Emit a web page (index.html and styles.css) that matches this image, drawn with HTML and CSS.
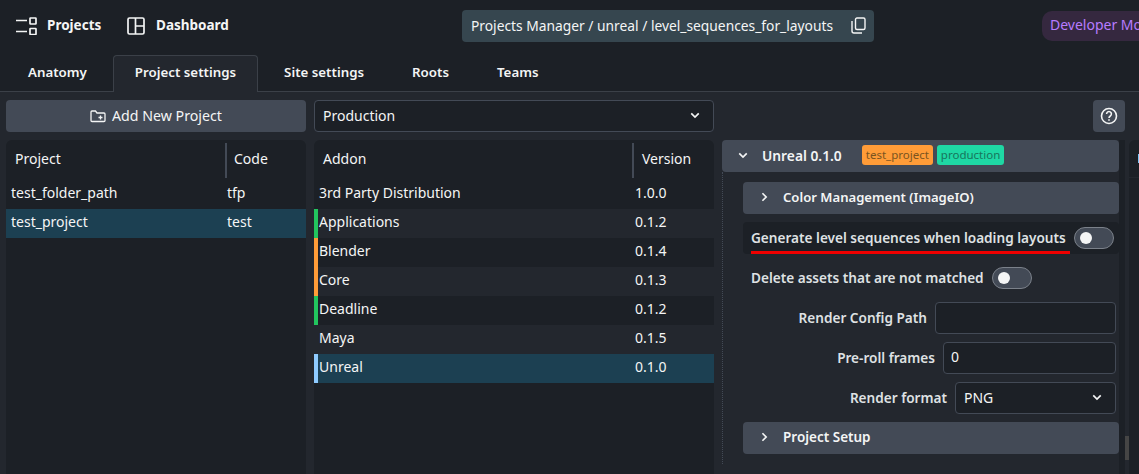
FILE: index.html
```html
<!DOCTYPE html>
<html lang="en">
<head>
    <meta charset="UTF-8">
    <title>Project settings</title>
    <link rel="stylesheet" href="styles.css">
</head>
<body>

    <header class="topbar">
        <div class="nav-item nav-projects">
            <svg width="22" height="18" viewBox="0 0 22 18" fill="none" stroke="#f4f5f5" stroke-width="1.7">
                <path d="M1 3.500h11M1 14.500h11"/>
                <rect x="15" y="1" width="6" height="6" rx="0.5"/>
                <rect x="15" y="11.500" width="6" height="6" rx="0.5"/>
            </svg>
            <span>Projects</span>
        </div>
        <div class="nav-item nav-dashboard">
            <svg width="18" height="18" viewBox="0 0 18 18" fill="none" stroke="#f4f5f5" stroke-width="1.7">
                <rect x="1" y="1" width="16" height="16" rx="1.500"/>
                <path d="M8.500 1v16M8.500 9H17"/>
            </svg>
            <span>Dashboard</span>
        </div>
        <div class="breadcrumb">
            <span>Projects Manager / unreal / level_sequences_for_layouts</span>
            <svg width="15" height="17" viewBox="0 0 15 17" fill="none" stroke="#f4f5f5" stroke-width="1.4">
                <rect x="4.500" y="1" width="9.500" height="11.500" rx="1.500"/>
                <path d="M1 4v10a2 2 0 0 0 2 2h8"/>
            </svg>
        </div>
        <div class="dev-mode">Developer Mode</div>
    </header>

    <nav class="tabs">
        <div class="tab">Anatomy</div>
        <div class="tab tab-active">Project settings</div>
        <div class="tab">Site settings</div>
        <div class="tab">Roots</div>
        <div class="tab">Teams</div>
    </nav>

    <main class="content">
        <div class="toolbar">
            <button class="add-btn">
                <svg width="16" height="14" viewBox="0 0 16 14" fill="none" stroke="#f4f5f5" stroke-width="1.3">
                    <path d="M1 3a1 1 0 0 1 1-1h3.500l1.500 2h7a1 1 0 0 1 1 1v6.500a1 1 0 0 1-1 1H2a1 1 0 0 1-1-1z"/>
                    <path d="M10.500 6.500v4M8.500 8.500h4"/>
                </svg>
                <span>Add New Project</span>
            </button>
            <div class="select bundle-select">
                <span>Production</span>
                <svg width="10" height="7" viewBox="0 0 12 8" fill="none" stroke="#f4f5f5" stroke-width="2"><path d="M1.500 1.500 6 6l4.500-4.500"/></svg>
            </div>
            <button class="help-btn">
                <svg width="18" height="18" viewBox="0 0 18 18" fill="none" stroke="#f4f5f5" stroke-width="1.600">
                    <circle cx="9" cy="9" r="7.500"/>
                    <path d="M6.600 7a2.400 2.400 0 1 1 3.700 2c-.9.600-1.300 1-1.300 2"/>
                    <path d="M9 12.200v1.600"/>
                </svg>
            </button>
        </div>

        <div class="columns">
            <section class="table table-projects">
                <div class="table-head">
                    <div class="head-cell col-project">Project</div>
                    <div class="head-cell col-code">Code</div>
                </div>
                <div class="row"><span class="col-project">test_folder_path</span><span class="col-code">tfp</span></div>
                <div class="row row-selected"><span class="col-project">test_project</span><span class="col-code">test</span></div>
            </section>

            <section class="table table-addons">
                <div class="table-head">
                    <div class="head-cell col-addon">Addon</div>
                    <div class="head-cell col-version">Version</div>
                </div>
                <div class="row"><span class="col-addon">3rd Party Distribution</span><span class="col-version">1.0.0</span></div>
                <div class="row row-alt mark-green"><span class="col-addon">Applications</span><span class="col-version">0.1.2</span></div>
                <div class="row mark-orange"><span class="col-addon">Blender</span><span class="col-version">0.1.4</span></div>
                <div class="row row-alt mark-orange"><span class="col-addon">Core</span><span class="col-version">0.1.3</span></div>
                <div class="row mark-green"><span class="col-addon">Deadline</span><span class="col-version">0.1.2</span></div>
                <div class="row row-alt"><span class="col-addon">Maya</span><span class="col-version">0.1.5</span></div>
                <div class="row row-selected mark-blue"><span class="col-addon">Unreal</span><span class="col-version">0.1.0</span></div>
            </section>

            <section class="settings">
                <div class="panel-head panel-main">
                    <svg width="10" height="7" viewBox="0 0 12 8" fill="none" stroke="#f4f5f5" stroke-width="2"><path d="M1.500 1.500 6 6l4.500-4.500"/></svg>
                    <span class="panel-title">Unreal 0.1.0</span>
                    <span class="badges">
                        <span class="badge badge-orange">test_project</span>
                        <span class="badge badge-green">production</span>
                    </span>
                </div>
                <div class="panel-body">
                    <div class="panel-head">
                        <svg width="7" height="10" viewBox="0 0 8 12" fill="none" stroke="#f4f5f5" stroke-width="2"><path d="M1.500 1.500 6 6l-4.500 4.500"/></svg>
                        <span class="panel-title title-tight">Color Management (ImageIO)</span>
                    </div>
                    <div class="field field-highlight">
                        <span class="field-label underlined">Generate level sequences when loading layouts</span>
                        <span class="toggle"></span>
                    </div>
                    <div class="field">
                        <span class="field-label">Delete assets that are not matched</span>
                        <span class="toggle"></span>
                    </div>
                    <div class="field field-right">
                        <span class="field-label">Render Config Path</span>
                        <div class="input input-path"></div>
                    </div>
                    <div class="field field-right">
                        <span class="field-label">Pre-roll frames</span>
                        <div class="input input-frames">0</div>
                    </div>
                    <div class="field field-right">
                        <span class="field-label">Render format</span>
                        <div class="select input-format">
                            <span>PNG</span>
                            <svg width="10" height="7" viewBox="0 0 12 8" fill="none" stroke="#f4f5f5" stroke-width="2"><path d="M1.500 1.500 6 6l4.500-4.500"/></svg>
                        </div>
                    </div>
                    <div class="panel-head">
                        <svg width="7" height="10" viewBox="0 0 8 12" fill="none" stroke="#f4f5f5" stroke-width="2"><path d="M1.500 1.500 6 6l-4.500 4.500"/></svg>
                        <span class="panel-title">Project Setup</span>
                    </div>
                </div>
            </section>

            <div class="scroll-gutter">
                <div class="scroll-track"><div class="scroll-thumb"></div></div>
            </div>
            <section class="side-panel">
                <div class="side-head"><div class="side-mark"></div></div>
            </section>
        </div>
    </main>

</body>
</html>
```

FILE: styles.css
```css
html, body {
    margin: 0;
    padding: 0;
    height: 474px;
    overflow: hidden;
}
body {
    width: 1139px;
    background-color: #1c2026;
    color: #f4f5f5;
    font-family: "Noto Sans", sans-serif;
    font-size: 14px;
}
svg {
    display: block;
    flex: none;
}

/* top bar */
.topbar {
    height: 52px;
    display: flex;
    align-items: center;
    white-space: nowrap;
}
.nav-item {
    display: flex;
    align-items: center;
    flex: none;
    font-weight: 700;
    font-size: 13.5px;
}
.nav-item span {
    margin-bottom: 3px;
}
.nav-projects {
    margin-left: 15px;
    width: 112px;
}
.nav-projects span {
    margin-left: 10px;
}
.nav-dashboard {
    width: 335px;
}
.nav-dashboard span {
    margin-left: 11px;
}
.breadcrumb {
    flex: none;
    width: 412px;
    height: 32px;
    box-sizing: border-box;
    padding: 0 8px 2px 9px;
    background-color: #36464f;
    border-radius: 4px;
    display: flex;
    align-items: center;
    justify-content: space-between;
    font-size: 13.8px;
}
.dev-mode {
    margin-left: 168px;
    padding: 0 8px;
    height: 30px;
    line-height: 28px;
    background-color: #35283f;
    color: #b77cff;
    border-radius: 10px;
    flex: none;
}

/* tabs */
.tabs {
    height: 40px;
    display: flex;
    gap: 4px;
    align-items: flex-end;
    box-sizing: border-box;
    padding-left: 6px;
    border-bottom: 1px solid #3b4048;
}
.tab {
    height: 37px;
    box-sizing: border-box;
    padding: 0 21px;
    line-height: 32px;
    font-weight: 600;
    font-size: 13.3px;
    border: 1px solid transparent;
    border-bottom: none;
    margin-bottom: -1px;
}
.tab-active {
    background-color: #23272e;
    border-color: #3b4048;
    border-radius: 4px 4px 0 0;
}

/* content */
.content {
    background-color: #23272e;
    height: 382px;
    padding: 8px 14px 0 6px;
}
.toolbar {
    display: flex;
    height: 32px;
    gap: 8px;
}
.add-btn {
    width: 300px;
    background-color: #434a56;
    border: none;
    border-radius: 4px;
    color: #f4f5f5;
    font: inherit;
    font-size: 14.2px;
    display: flex;
    align-items: center;
    justify-content: center;
    gap: 6px;
}
.add-btn span {
    margin-bottom: 2px;
}
.select {
    box-sizing: border-box;
    background-color: #1c2026;
    border: 1px solid #434a56;
    border-radius: 4px;
    display: flex;
    align-items: center;
    justify-content: space-between;
    padding: 0 13px 2px 8px;
}
.bundle-select {
    width: 400px;
    height: 32px;
}
.help-btn {
    margin-left: auto;
    width: 32px;
    background-color: #434a56;
    border: none;
    border-radius: 4px;
    display: flex;
    align-items: center;
    justify-content: center;
    padding: 0;
}

.columns {
    display: flex;
    margin-top: 8px;
    height: 334px;
    margin-right: -14px;
}

/* tables */
.table {
    background-color: #1c2026;
    border-radius: 6px 6px 0 0;
    margin-right: 8px;
    flex: none;
}
.table-projects {
    width: 300px;
}
.table-addons {
    width: 400px;
}
.table-head {
    display: flex;
    height: 38px;
    margin-bottom: 2px;
    align-items: flex-end;
}
.head-cell {
    height: 35px;
    line-height: 32px;
    box-sizing: border-box;
    flex: none;
}
.table-projects .head-cell.col-project {
    padding-left: 9px;
    border-right: 2px solid #434a56;
    width: 221px;
}
.table-projects .head-cell.col-code {
    padding-left: 7px;
}
.table-addons .head-cell.col-addon {
    padding-left: 9px;
    border-right: 2px solid #434a56;
    width: 320px;
}
.table-addons .head-cell.col-version {
    padding-left: 8px;
}
.row {
    display: flex;
    height: 29px;
    line-height: 25px;
    box-sizing: border-box;
    border-left: 4px solid transparent;
    padding-left: 1px;
}
.row-alt {
    background-color: #23272e;
}
.row-selected {
    background-color: #1c4052;
}
.mark-green {
    border-left-color: #22c55e;
}
.mark-orange {
    border-left-color: #ff9c38;
}
.mark-blue {
    border-left-color: #8fcbff;
}
.col-project {
    width: 216px;
}
.col-addon {
    width: 316px;
}

/* settings column */
.settings {
    width: 397px;
    flex: none;
}
.panel-head {
    height: 32px;
    box-sizing: border-box;
    padding: 0 0 2px 18px;
    background-color: #434a56;
    border-radius: 4px;
    display: flex;
    align-items: center;
}
.panel-main {
    padding-left: 16px;
}
.panel-main .panel-title {
    margin-left: 14px;
    font-size: 13.8px;
}
.panel-title {
    margin-left: 15px;
    font-weight: 600;
    font-size: 13.5px;
}
.title-tight {
    font-size: 13.1px;
}
.badges {
    display: flex;
    gap: 4px;
    margin-left: 20px;
}
.badge {
    height: 20px;
    line-height: 19px;
    padding: 0 4px;
    border-radius: 3px;
    font-size: 11.5px;
}
.badge-orange {
    background-color: #ff9c38;
    color: #7a5420;
}
.badge-green {
    background-color: #1fd8a4;
    color: #17755c;
}
.panel-body {
    padding: 10px 0 10px 20px;
    border-left: 1px dotted #434a56;
}
.field {
    display: flex;
    align-items: center;
    height: 32px;
    margin-top: 8px;
    padding-left: 8px;
    font-weight: 600;
    font-size: 13.6px;
    color: #dfe1e3;
    white-space: nowrap;
}
.field-highlight {
    background-color: #1c2026;
    border-radius: 4px;
    position: relative;
}
.underlined::after {
    content: "";
    position: absolute;
    left: 8px;
    top: 29px;
    width: 319px;
    height: 3px;
    background-color: #f00000;
}
.field-label {
    margin: 0 8px 2px 0;
}
.field-right {
    justify-content: flex-end;
    padding-right: 3px;
}
.toggle {
    width: 40px;
    height: 22px;
    box-sizing: border-box;
    background-color: #434a56;
    border: 1px solid #7b818a;
    border-radius: 11px;
    position: relative;
    flex: none;
}
.toggle::after {
    content: "";
    position: absolute;
    left: 5px;
    top: 4px;
    width: 12px;
    height: 12px;
    border-radius: 50%;
    background-color: #f4f5f5;
}
.input {
    height: 32px;
    box-sizing: border-box;
    background-color: #1c2026;
    border: 1px solid #434a56;
    border-radius: 4px;
    padding: 0 7px;
    line-height: 28px;
    font-weight: 400;
    font-size: 14px;
    color: #f4f5f5;
}
.input-path {
    width: 181px;
}
.input-frames {
    width: 173px;
}
.input-format {
    width: 161px;
    height: 32px;
    font-weight: 400;
    font-size: 14px;
    color: #f4f5f5;
}
.field + .panel-head {
    margin-top: 8px;
}

/* right edge */
.scroll-gutter {
    width: 10px;
    flex: none;
    background-color: #1c2026;
}
.scroll-track {
    width: 4px;
    height: 100%;
    margin-left: 6px;
    background-color: #23272e;
    overflow: hidden;
}
.scroll-thumb {
    width: 4px;
    height: 24px;
    margin-top: 296px;
    background-color: #454545;
}
.side-panel {
    flex: 1;
    background-color: #1c2026;
    border-radius: 6px 0 0 0;
}
.side-head {
    height: 38px;
    box-sizing: border-box;
    padding: 14px 0 0 9px;
    border-bottom: 1px solid #23272e;
}
.side-mark {
    width: 1px;
    height: 9px;
    background-color: #7cc4f5;
}
```
